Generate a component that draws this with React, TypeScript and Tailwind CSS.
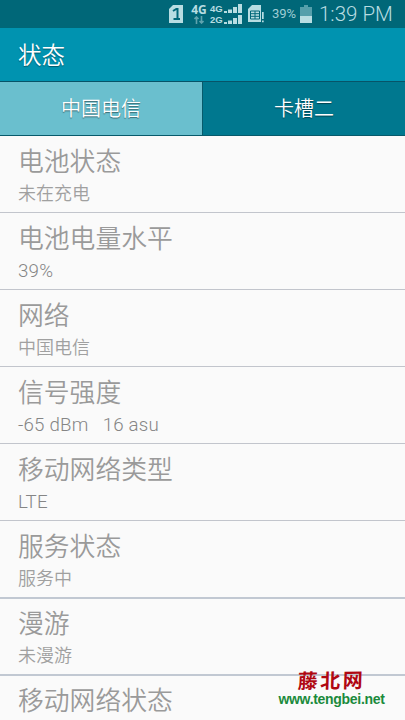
import clsx from "clsx";

const rows = [
  { title: "电池状态", value: "未在充电" },
  { title: "电池电量水平", value: "39%" },
  { title: "网络", value: "中国电信" },
  { title: "信号强度", value: "-65 dBm\u00a0\u00a0 16 asu" },
  { title: "移动网络类型", value: "LTE" },
  { title: "服务状态", value: "服务中" },
  { title: "漫游", value: "未漫游" },
  { title: "移动网络状态", value: "" },
];

export default function App() {
  return (
    <div className="relative flex h-[720px] w-[405px] flex-col overflow-hidden bg-[#fafafa] font-[Roboto,'Noto_Sans_CJK_SC',sans-serif] font-light">
      <StatusBar />
      <header className="flex h-[54px] shrink-0 items-center border-b border-[#075468] bg-[#0093b0] pt-1 pl-[18px] text-[23.5px] leading-none text-white">
        <h1 className="font-[350] text-shadow-[0_1px_1px_rgb(0_0_0/0.4)]">状态</h1>
      </header>
      <Tabs />
      <ul className="shrink-0">
        {rows.map((row, i) => (
          <li
            key={row.title}
            className={clsx(
              "pl-[18px] text-[#9a9a9a]",
              i < 5 && "h-[77px] border-b border-[#c2c5cc] pt-[11px]",
              i === 5 && "h-[78px] border-b-2 border-[#c1c8d2] pt-[11px]",
              i > 5 && "h-[77px] border-b-2 border-[#c1c8d2] pt-2.5",
            )}
          >
            <div className="h-[31px] text-[25.8px] leading-[31px] font-[350]">{row.title}</div>
            <div className="mt-1 h-6 text-[18px] leading-6 font-[350] text-[#a0a0a0]">
              {/^[\x20-\xff]+$/.test(row.value) ? (
                <span className="text-[18.7px] tracking-[0.2px] text-[#858585]">{row.value}</span>
              ) : (
                row.value
              )}
            </div>
          </li>
        ))}
      </ul>
      <Watermark />
    </div>
  );
}

function StatusBar() {
  return (
    <div className="flex h-7 shrink-0 items-center bg-[#006778] pl-[169px] text-[#b8dde2]">
      <svg width="14" height="18" viewBox="0 0 14 18">
        <path d="M4 0h10v18H0V4z" fill="currentColor" />
        <path d="M4 6l3.3-2h1.2v9.5M4.5 14h6.5" fill="none" stroke="#006778" strokeWidth="2" />
      </svg>
      <div className="ml-2 flex w-4 flex-col items-center">
        <span className="font-['Open_Sans',sans-serif] text-[12px] leading-[11px] font-bold">4G</span>
        <svg width="10" height="8" viewBox="0 0 10 8" className="mt-px" fill="none" stroke="#5fa3ae" strokeWidth="1.6">
          <path d="M2.5 8V1M.5 3l2-2 2 2M7.5 0v7M5.5 5l2 2 2-2" />
        </svg>
      </div>
      <div className="ml-[3px] flex flex-col gap-[2px] font-['Liberation_Sans',sans-serif] text-[9.5px] leading-[9px] font-bold">
        <SignalLine label="4G" />
        <SignalLine label="2G" />
      </div>
      <svg width="17" height="18" viewBox="0 0 17 18" className="ml-[6px]">
        <path d="M4 0h9v17H0V4z" fill="currentColor" />
        <path d="M2.5 6h9v8h-9zM2.5 8.7h9M2.5 11.3h9M7 6v8" fill="none" stroke="#006778" />
        <path d="M13 5h4v13h-4z" fill="#006778" />
        <path d="M14 7h1.7v7H14zM14 15.5h1.7v1.7H14z" fill="currentColor" />
      </svg>
      <span className="ml-[7px] w-[25px] text-[13px] font-normal tracking-[-0.1px] text-[#9fcdd4]">39%</span>
      <svg width="12" height="18" viewBox="0 0 12 18" className="ml-[3px]">
        <path d="M4 0h4v2h4v16H0V2h4z" fill="#559fab" />
        <path d="M0 11h12v7H0z" fill="currentColor" />
      </svg>
      <span className="ml-[7px] text-[20.5px] leading-none whitespace-nowrap">1:39 PM</span>
    </div>
  );
}

function SignalLine({ label }: { label: string }) {
  return (
    <div className="flex h-[9px] items-end">
      <span className="w-[14px]">{label}</span>
      <svg width="18" height="9" viewBox="0 0 18 9" fill="currentColor">
        <path d="M0 7h3v2H0zM4 5.5h4v3.5H4zM9 3h4v6H9zM14 0h4v9h-4z" />
      </svg>
    </div>
  );
}

function Tabs() {
  return (
    <div className="flex h-[54px] shrink-0 border-b border-[#075a6b] text-[20px] font-[350] text-white">
      <button
        type="button"
        className="w-[202px] bg-[#6abfce] text-shadow-[0_1px_1px_rgb(0_0_0/0.45)]"
      >
        中国电信
      </button>
      <button
        type="button"
        className="flex-1 border-l border-[#075a6b] bg-[#00788f] text-shadow-[0_1px_1px_rgb(0_0_0/0.45)]"
      >
        卡槽二
      </button>
    </div>
  );
}

function Watermark() {
  return (
    <div className="absolute top-[669px] left-[278px] w-[107px] text-center">
      <div className="-skew-x-3 -rotate-1 font-['Noto_Sans_CJK_SC',sans-serif] text-[20px] leading-[22px] font-bold tracking-[2.5px] text-[#b00812]">
        藤北网
      </div>
      <div className="font-['Liberation_Sans',sans-serif] text-[14px] leading-4 font-bold tracking-[-0.3px] text-[#1b8a3c]">
        www.tengbei.net
      </div>
    </div>
  );
}
